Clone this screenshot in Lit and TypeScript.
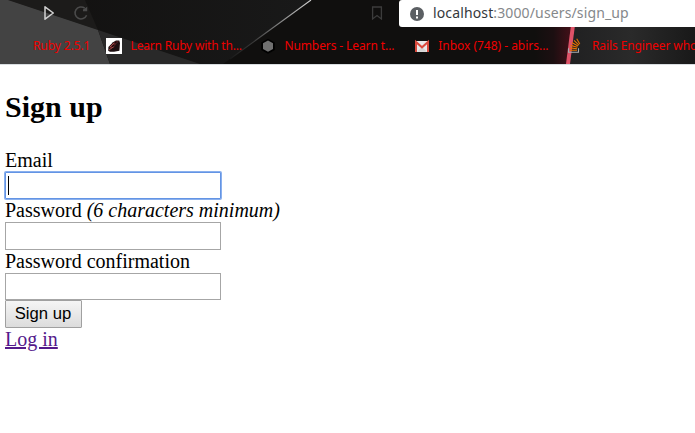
import { LitElement, html, css, svg } from "lit";
import { customElement } from "lit/decorators.js";

const ruby = svg`<rect width="16" height="16" fill="#fff"/>
  <path d="M2.2 12.8 2.4 9 7 4.2 10 2.4 13.3 2.6 14 5 13.4 12.8 8 13.8 4 13.7Z" fill="#1c0e10"/>
  <path d="M3 9.3 7.3 5 10 3.2 12.7 3.4 10.2 5.8 8.5 8.5 5.5 10.5Z" fill="#5a2022"/>
  <path d="M4 9 8 5.2M3 12 5 10.5 8 8.5" stroke="#b95250" stroke-width=".9" fill="none"/>
  <path d="M6 8.6 8.3 7M9 5 10.5 4" stroke="#1a090b" stroke-width="1.3"/>`;
const hexagon = svg`<path d="M8 .8 14.8 4.5V12L8 15.7 1.2 12V4.5Z" fill="#000"/>
  <path d="M8 2.5 13 5.3V11L8 13.8 3 11V5.3Z" fill="#707070"/>`;
const mail = svg`<path d="M1 3H15V14H1Z" fill="#e9e9e9"/>
  <path d="M3 13.8 8 9 13 13.8Z" fill="#d3d3d3"/>
  <path d="M2 14V4L8 9.3 14 4V14" fill="none" stroke="#d94a3d" stroke-width="2"/>`;
const stack = svg`<path d="M1.5 10.3V14.3H11.5V10.3" fill="none" stroke="#a9adb0" stroke-width="1.1"/>
  <path d="M3 12.2H10M3 9.9 10 10.7M3.5 7.4 10.4 9.3M4.8 4.5 11 8.1M7 2.3 12 7.2M9.7.8 12.8 6" stroke="#e87300" stroke-width="1.1"/>`;

const bookmarks = [
  { icon: ruby, label: "Learn Ruby with th...", tracking: -0.2 },
  { icon: hexagon, label: "Numbers - Learn t...", tracking: -0.1 },
  { icon: mail, label: "Inbox (748) - abirs...", tracking: -0.02 },
  { icon: stack, label: "Rails Engineer who", tracking: -0.1 },
];

@customElement("browser-bar")
class BrowserBar extends LitElement {
  static styles = css`
    :host { display: block; position: relative; height: 64px; overflow: hidden; background: #100f0e;
      border-bottom: 1px solid #d9dee1; font-family: "Noto Sans", sans-serif; }
    .theme { position: absolute; inset: 0; width: 695px; height: 64px; }
    .tools { position: relative; display: flex; height: 27px; }
    .nav { display: flex; width: 399px; }
    .nav svg { width: 16px; height: 16px; margin-top: 5px; flex: none; }
    .play { margin-left: 41px; }
    .reload { margin-left: 16px; }
    .save { margin-left: auto; margin-right: 14px; }
    .address { flex: 1; display: flex; align-items: center; background: #fff; border-radius: 3px 0 0 3px;
      padding-left: 11px; gap: 9px; font-size: 14px; letter-spacing: .13px; line-height: 26px; color: #85888b; white-space: nowrap; }
    .address svg { width: 14px; height: 14px; }
    .url { padding-bottom: 2px; line-height: 24px; }
    .host { color: #35383b; }
    .marks { position: relative; display: flex; height: 37px; padding-left: 33px; color: #f00000;
      font-size: 12px; line-height: 37px; white-space: nowrap; }
    .first { width: 73px; flex: none; letter-spacing: -.1px; }
    .mark { display: flex; width: 153.8px; flex: none; gap: 8.6px; align-items: center; }
    .mark svg { width: 16px; height: 16px; flex: none; }
  `;
  render() {
    return html`
      <svg class="theme" viewBox="0 0 695 64">
        <defs>
          <linearGradient id="glow"><stop stop-color="#100f0e"/><stop offset=".5" stop-color="#1c0f11"/><stop offset="1" stop-color="#451019"/></linearGradient>
          <linearGradient id="right"><stop stop-color="#202021"/><stop offset=".5" stop-color="#2a2a2a"/><stop offset="1" stop-color="#191919"/></linearGradient>
          <linearGradient id="mid"><stop stop-color="#11100f"/><stop offset="1" stop-color="#191919"/></linearGradient>
          <linearGradient id="line" x1="1" y1="0" x2="0" y2="1"><stop stop-color="#d4d4d4"/><stop offset=".45" stop-color="#777"/><stop offset=".7" stop-color="#3c3c3c"/><stop offset="1" stop-color="#191919"/></linearGradient>
        </defs>
        <path d="M8 0H311L223 64H0V0Z" fill="url(#mid)"/>
        <path d="M8 0H85L98 30Z" fill="#1c1b1a"/>
        <path d="M0 0H8L98 30 110 64H0Z" fill="#434343"/>
        <path d="M98 30 200 64H110Z" fill="#292929"/>
        <path d="M311 0 230 59" stroke="url(#line)" stroke-width="1.1"/>
        <rect x="535" width="37" height="64" fill="url(#glow)"/>
        <path d="M573 25H695V64H568Z" fill="url(#right)"/>
        <path d="M571 25H575L570 64H566Z" fill="#df5268"/>
      </svg>
      <div class="tools">
        <div class="nav">
          <svg class="play" viewBox="0 0 16 16"><path d="M4 1.8 12.3 8 4 14.2Z" fill="none" stroke="#d2d2d2" stroke-width="1.5" stroke-linejoin="round"/></svg>
          <svg class="reload" viewBox="0 0 16 16"><path d="M13.6 10.2A6 6 0 1 1 11.7 3.2" fill="none" stroke="#4b4b4b" stroke-width="1.5"/><path d="M10 4.5 14.2 1.7V6.2H10Z" fill="#4b4b4b"/></svg>
          <svg class="save" viewBox="0 0 16 16"><path d="M3.6 2H12.4V14L8 10.6 3.6 14Z" fill="none" stroke="#3c3c3c" stroke-width="1.3"/></svg>
        </div>
        <div class="address">
          <svg viewBox="0 0 14 14"><circle cx="7" cy="7" r="7" fill="#5b5f63"/><path d="M7 3V8M7 9.6V11.5" stroke="#fff" stroke-width="2"/></svg>
          <span class="url"><span class="host">localhost</span>:3000/users/sign_up</span>
        </div>
      </div>
      <div class="marks">
        <span class="first">Ruby 2.5.1</span>
        ${bookmarks.map((b) => html`<span class="mark" style="letter-spacing:${b.tracking}px"><svg viewBox="0 0 16 16">${b.icon}</svg>${b.label}</span>`)}
      </div>`;
  }
}

@customElement("app-root")
class AppRoot extends LitElement {
  static styles = css`
    :host { display: block; height: 433px; overflow: hidden; background: #fff; color: #000;
      font: 20px/23px "Liberation Serif", serif; }
    main { padding: 25px 5px 0; }
    h2 { margin: 0 0 25px; font-size: 30px; line-height: 34px; }
    form { display: flex; flex-direction: column; align-items: flex-start; }
    label { display: block; }
    .field { display: block; box-sizing: border-box; width: 216px; height: 27px; margin: 0; padding: 3px;
      border: 1px solid #a6a6a6; border-radius: 0; background: #fff; outline: none; }
    .tall { height: 28px; }
    .focused { display: flex; align-items: center; padding-left: 2px; border-color: #6394e4; box-shadow: 0 0 0 1px #8ab0ee; border-radius: 1px; }
    .caret { width: 1px; height: 19px; background: #000; }
    button { box-sizing: border-box; width: 77px; height: 28px; margin: 0; padding: 0 1px 0 0; border: 1px solid #a0a0a0;
      border-radius: 1px; background: linear-gradient(#f5f5f5, #dcdcdc); color: #000;
      font: 16.67px/24px "Liberation Sans", sans-serif; }
    a { color: #551a8b; text-decoration: underline; }
  `;
  render() {
    return html`
      <browser-bar></browser-bar>
      <main>
        <h2>Sign up</h2>
        <form>
          <label>Email</label>
          <div class="field focused" role="textbox" aria-label="Email"><span class="caret"></span></div>
          <label for="password">Password <em>(6 characters minimum)</em></label>
          <input class="field tall" id="password" type="password">
          <label for="confirmation">Password confirmation</label>
          <input class="field" id="confirmation" type="password">
          <button type="button">Sign up</button>
        </form>
        <a href="#">Log in</a>
      </main>`;
  }
}
